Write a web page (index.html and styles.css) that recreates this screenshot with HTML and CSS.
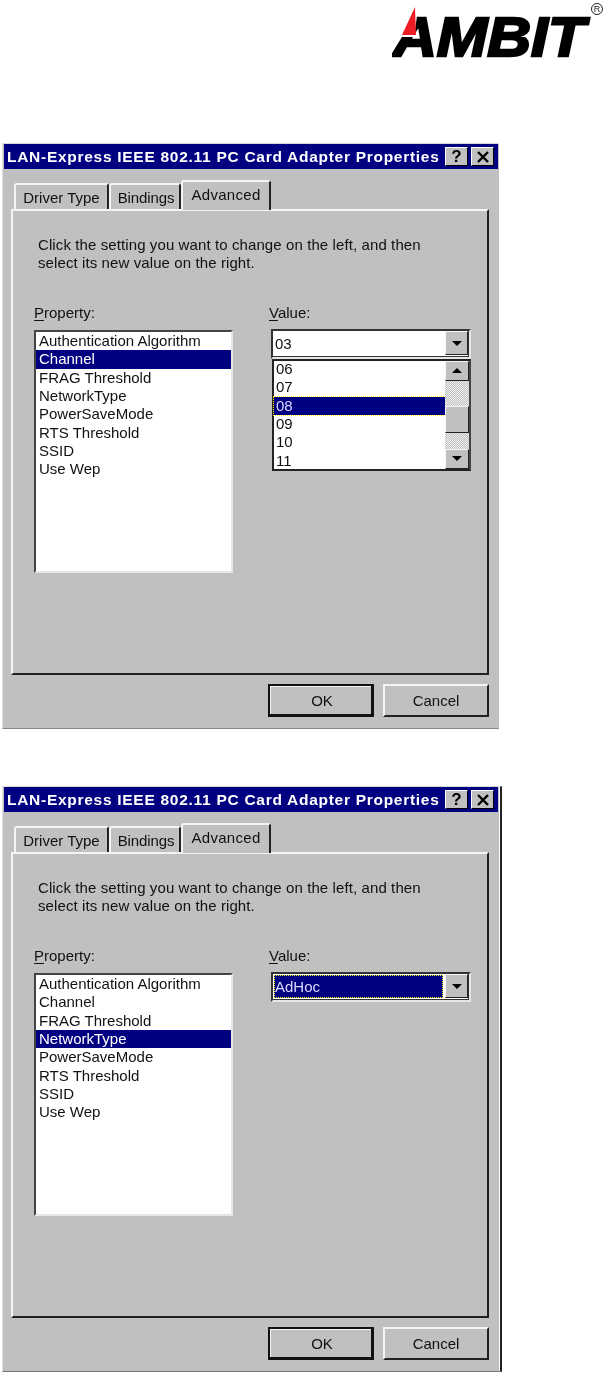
FILE: index.html
```html
<!DOCTYPE html>
<html lang="en">
<head>
<meta charset="utf-8">
<title>LAN-Express Properties</title>
<link rel="stylesheet" href="styles.css">
</head>
<body>
<header class="brand">
  <svg class="logo" width="212" height="76" viewBox="0 0 212 76" aria-label="AMBIT">
    <text class="logo-word" x="1" y="53" textLength="192" lengthAdjust="spacingAndGlyphs">AMBIT</text>
    <polygon class="logo-gap" points="0,0 25,0 25,13 22,34 0,34"/>
    <polygon class="logo-red" points="23,4 24,32 10,32"/>
    <circle class="logo-ring" cx="205" cy="6" r="5.5"/>
    <text class="logo-reg" x="205" y="9" text-anchor="middle">R</text>
  </svg>
</header>

<section class="dialog">
  <div class="titlebar">
    <span class="title">LAN-Express IEEE 802.11 PC Card Adapter Properties</span>
    <span class="cap-btn cap-help">?</span>
    <span class="cap-btn cap-close"><svg width="14" height="12" viewBox="0 0 14 12"><path d="M2 1l10 10M12 1L2 11" stroke="#000" stroke-width="2.4"/></svg></span>
  </div>
  <div class="tabs">
    <span class="tab tab-driver">Driver Type</span>
    <span class="tab tab-bind">Bindings</span>
    <span class="tab tab-active">Advanced</span>
  </div>
  <div class="panel">
    <p class="intro">Click the setting you want to change on the left, and then<br>select its new value on the right.</p>
    <div class="columns">
      <div class="col-prop">
        <div class="label"><u>P</u>roperty:</div>
        <ul class="list">
          <li>Authentication Algorithm</li>
          <li class="sel">Channel</li>
          <li>FRAG Threshold</li>
          <li>NetworkType</li>
          <li>PowerSaveMode</li>
          <li>RTS Threshold</li>
          <li>SSID</li>
          <li>Use Wep</li>
        </ul>
      </div>
      <div class="col-val">
        <div class="label"><u>V</u>alue:</div>
        <div class="combo">
          <span class="combo-text">03</span>
          <span class="arrow-btn"><i class="tri-down"></i></span>
        </div>
        <div class="drop">
          <ul class="drop-list">
            <li>06</li>
            <li>07</li>
            <li class="sel-dot">08</li>
            <li>09</li>
            <li>10</li>
            <li>11</li>
          </ul>
          <div class="scroll">
            <span class="arrow-btn sb-btn"><i class="tri-up"></i></span>
            <span class="track track-a"></span>
            <span class="arrow-btn thumb"></span>
            <span class="track track-b"></span>
            <span class="arrow-btn sb-btn"><i class="tri-down"></i></span>
          </div>
        </div>
      </div>
    </div>
  </div>
  <div class="actions">
    <span class="btn btn-default">OK</span>
    <span class="btn">Cancel</span>
  </div>
</section>

<section class="dialog dialog-second">
  <div class="titlebar">
    <span class="title">LAN-Express IEEE 802.11 PC Card Adapter Properties</span>
    <span class="cap-btn cap-help">?</span>
    <span class="cap-btn cap-close"><svg width="14" height="12" viewBox="0 0 14 12"><path d="M2 1l10 10M12 1L2 11" stroke="#000" stroke-width="2.4"/></svg></span>
  </div>
  <div class="tabs">
    <span class="tab tab-driver">Driver Type</span>
    <span class="tab tab-bind">Bindings</span>
    <span class="tab tab-active">Advanced</span>
  </div>
  <div class="panel">
    <p class="intro">Click the setting you want to change on the left, and then<br>select its new value on the right.</p>
    <div class="columns">
      <div class="col-prop">
        <div class="label"><u>P</u>roperty:</div>
        <ul class="list">
          <li>Authentication Algorithm</li>
          <li>Channel</li>
          <li>FRAG Threshold</li>
          <li class="sel">NetworkType</li>
          <li>PowerSaveMode</li>
          <li>RTS Threshold</li>
          <li>SSID</li>
          <li>Use Wep</li>
        </ul>
      </div>
      <div class="col-val">
        <div class="label"><u>V</u>alue:</div>
        <div class="combo">
          <span class="combo-text combo-sel">AdHoc</span>
          <span class="arrow-btn"><i class="tri-down"></i></span>
        </div>
      </div>
    </div>
  </div>
  <div class="actions">
    <span class="btn btn-default">OK</span>
    <span class="btn">Cancel</span>
  </div>
</section>
</body>
</html>
```
FILE: styles.css
```css
* { box-sizing: border-box; }
html, body { margin: 0; padding: 0; background: #fff; }
body {
  width: 604px;
  height: 1374px;
  overflow: hidden;
  font-family: "Liberation Sans", Arial, sans-serif;
  font-size: 15px;
  color: #111;
}
ul { list-style: none; margin: 0; padding: 0; }
p { margin: 0; }

.brand { height: 143px; padding: 3px 0 0 392px; }
.logo { display: block; filter: blur(0.4px); }
.logo-word {
  font-family: "Liberation Sans", Arial, sans-serif;
  font-weight: 700;
  font-style: italic;
  font-size: 56px;
  fill: #000;
  stroke: #000;
  stroke-width: 2.4px;
}
.logo-red { fill: #ee1c25; }
.logo-gap { fill: #fff; }
.logo-ring { fill: none; stroke: #222; stroke-width: 1; }
.logo-reg { font-size: 9px; fill: #222; font-family: "Liberation Sans", Arial, sans-serif; }

.dialog {
  width: 497px;
  height: 586px;
  margin-left: 2px;
  background: #c0c0c0;
  border-top: 1px solid #d8d8d8;
  border-left: 1px solid #e0e0e0;
  border-bottom: 1px solid #8a8a8a;
  filter: blur(0.4px);
}
.dialog-second {
  margin-top: 57px;
  width: 500px;
  border-right: 2px solid #222;
  box-shadow: inset -1px 0 0 #fff;
  border-bottom-color: #777;
}

.titlebar {
  height: 25px;
  width: 494px;
  margin-left: 1px;
  background: #000080;
  display: flex;
  align-items: center;
  padding: 0 4px 0 3px;
}
.title {
  flex: 1;
  color: #fff;
  font-weight: 700;
  font-size: 15.5px;
  letter-spacing: 0.72px;
  white-space: nowrap;
}
.cap-btn {
  width: 23px;
  height: 19px;
  background: #c0c0c0;
  border: 1px solid;
  border-color: #fff #000 #000 #fff;
  display: flex;
  align-items: center;
  justify-content: center;
  color: #000;
  font-weight: 700;
  font-size: 17px;
}
.cap-close { margin-left: 3px; }

.tabs {
  display: flex;
  align-items: flex-end;
  height: 40px;
  padding-left: 11px;
}
.tab {
  height: 26px;
  background: #c0c0c0;
  border-top: 2px solid #f4f4f4;
  border-left: 2px solid #f4f4f4;
  border-right: 2px solid #222;
  border-top-left-radius: 3px;
  border-top-right-radius: 3px;
  display: flex;
  align-items: center;
  justify-content: center;
  white-space: nowrap;
}
.tab-driver { width: 95px; }
.tab-bind { width: 72px; padding-left: 2px; letter-spacing: -0.1px; }
.tab-active {
  width: 90px;
  height: 30px;
  position: relative;
  top: 1px;
  z-index: 1;
  padding-bottom: 4px;
  letter-spacing: 0.3px;
}

.panel {
  width: 478px;
  height: 466px;
  margin-left: 8px;
  border: 2px solid;
  border-color: #f4f4f4 #222 #222 #f4f4f4;
  padding: 25px 0 0 25px;
}
.intro { line-height: 18.4px; letter-spacing: 0.1px; }
.columns {
  display: grid;
  grid-template-columns: 199px 201px;
  column-gap: 36px;
  margin: 30px 0 0 -4px;
}
.label { height: 20px; line-height: 20px; }
.label u { text-underline-offset: 2px; }

.list {
  height: 243px;
  margin-top: 7px;
  background: #fff;
  border: 2px solid;
  border-color: #444 #e6e6e6 #e6e6e6 #444;
}
.list li {
  height: 18.35px;
  line-height: 18px;
  padding-left: 3px;
  white-space: nowrap;
}
.list .sel { background: #000080; color: #fff; }

.combo {
  height: 30px;
  width: 200px;
  margin: 6px 0 0 2px;
  background: #fff;
  border: 2px solid;
  border-color: #333 #e6e6e6 #e6e6e6 #333;
  box-shadow: inset -1px -1px 0 #333;
  display: flex;
  align-items: center;
  padding: 0 1px 1px 1px;
}
.combo-text { flex: 1; padding-left: 1px; }
.combo-sel {
  height: 23px;
  margin-right: 2px;
  line-height: 23px;
  background: #000080;
  color: #d8d8ff;
  outline: 1px dotted #ff0;
  outline-offset: -1px;
}
.arrow-btn {
  flex: none;
  width: 23px;
  height: 24px;
  background: #c0c0c0;
  border: 1px solid;
  border-color: #f4f4f4 #222 #222 #f4f4f4;
  display: flex;
  align-items: center;
  justify-content: center;
}
.tri-down, .tri-up {
  width: 0;
  height: 0;
  border-left: 5px solid transparent;
  border-right: 5px solid transparent;
}
.tri-down { border-top: 5px solid #000; }
.tri-up { border-bottom: 5px solid #000; }

.drop {
  width: 199px;
  height: 112px;
  margin: 0 0 0 3px;
  background: #fff;
  border: 2px solid #222;
  border-right-color: #444;
  display: flex;
}
.drop-list { flex: 1; margin-top: -1px; }
.drop-list li {
  height: 18.35px;
  line-height: 18px;
  padding-left: 2px;
}
.drop-list .sel-dot {
  background: #000080;
  color: #d8d8ff;
  outline: 1px dotted #ff0;
}
.scroll {
  width: 24px;
  display: flex;
  flex-direction: column;
}
.sb-btn { width: 24px; height: 20px; }
.thumb { width: 24px; height: 27px; }
.track {
  background-color: #fff;
  background-image: repeating-conic-gradient(#c0c0c0 0 25%, #eee 0 50%);
  background-size: 2px 2px;
}
.track-a { height: 25px; }
.track-b { flex: 1; }

.actions {
  display: flex;
  gap: 9px;
  margin: 9px 0 0 265px;
}
.btn {
  width: 106px;
  height: 33px;
  background: #c0c0c0;
  border: 2px solid;
  border-color: #f4f4f4 #222 #222 #f4f4f4;
  display: flex;
  align-items: center;
  justify-content: center;
}
.btn-default {
  border: 2px solid #111;
  border-bottom-width: 3px;
  border-right-width: 3px;
  box-shadow: inset 1px 1px 0 #f4f4f4;
  padding-left: 3px;
}
```
